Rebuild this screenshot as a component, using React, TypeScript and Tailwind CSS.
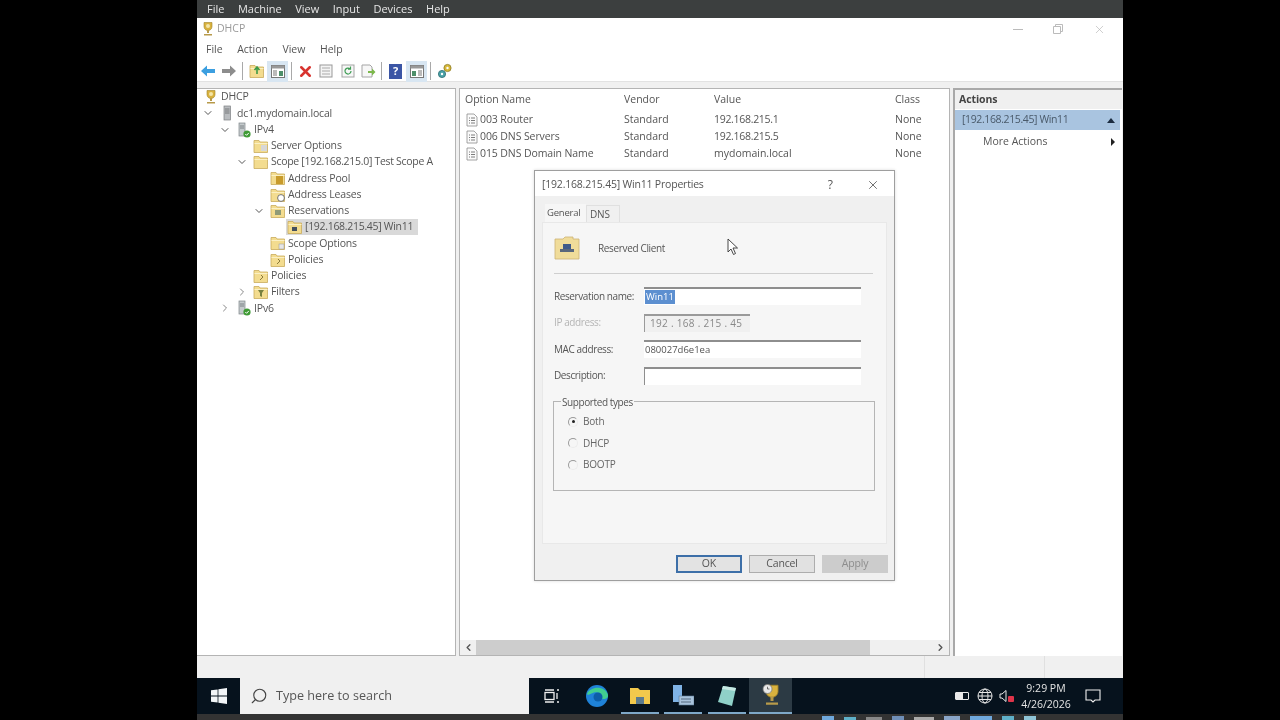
import type { ReactNode } from "react";
import { ChevronDown, ChevronRight, ChevronLeft, X, Search } from "lucide-react";

const uiFont = "font-['Open_Sans','Noto_Sans',sans-serif]";

function FolderIcon({ children }: { children?: ReactNode }) {
  return (
    <svg width="16" height="16" viewBox="0 0 16 16" className="shrink-0">
      <path d="M1 2.500h5l1 1.500h7.500v10.500H1z" fill="#f3dc8f" stroke="#c9ab5c" strokeWidth="0.8" />
      <path d="M1.500 5.500h13" stroke="#fbf0c4" strokeWidth="1" />
      {children}
    </svg>
  );
}

function ServerIcon() {
  return (
    <svg width="16" height="16" viewBox="0 0 16 16" className="shrink-0">
      <rect x="5" y="1" width="6.5" height="14" fill="#b9bcbf" stroke="#7c7f82" strokeWidth="0.7" />
      <path d="M6 4h4.500M6 6h4.500M6 8h4.500" stroke="#65686b" strokeWidth="0.8" />
    </svg>
  );
}

function TrophyIcon({ size = 16, clock }: { size?: number; clock?: boolean }) {
  return (
    <svg width={size} height={size} viewBox="0 0 16 16" className="shrink-0">
      <path d="M4 1.500h8v4c0 2.500-2 4-4 4s-4-1.500-4-4z" fill="#d9b23e" stroke="#a08328" strokeWidth="0.6" />
      <path d="M7 9h2v3H7zM4 13h8v1.500H4z" fill="#b79a4a" />
      {clock ? (
        <>
          <circle cx="5" cy="4" r="3" fill="#e8e8e8" stroke="#777" strokeWidth="0.5" />
          <path d="M5 2.500V4h1.300" stroke="#444" strokeWidth="0.5" fill="none" />
        </>
      ) : (
        <circle cx="8" cy="5" r="2" fill="#f4e6a8" />
      )}
    </svg>
  );
}

function IpIcon() {
  return (
    <svg width="16" height="16" viewBox="0 0 16 16" className="shrink-0">
      <rect x="3" y="1" width="6" height="13" fill="#c4cacc" stroke="#7e8588" strokeWidth="0.7" />
      <path d="M4 4h4M4 6h4" stroke="#6b7073" strokeWidth="0.8" />
      <circle cx="11" cy="12" r="3.600" fill="#3f9b35" />
      <path d="M9.300 12l1.300 1.300 2.200-2.400" stroke="#fff" strokeWidth="1" fill="none" />
    </svg>
  );
}

function DocIcon() {
  return (
    <svg width="14" height="14" viewBox="0 0 14 14" className="shrink-0">
      <path d="M2 1h7l3 3v9H2z" fill="#fbfbfb" stroke="#8d8d8d" strokeWidth="0.8" />
      <path d="M4 5h1M6 5h4M4 7.500h1M6 7.500h4M4 10h1M6 10h4" stroke="#6d6d6d" strokeWidth="0.9" />
    </svg>
  );
}

const depthClass = ["pl-[3px]", "pl-[3px]", "pl-[20px]", "pl-[37px]", "pl-[54px]", "pl-[71px]"];

type TreeRowProps = {
  depth: number;
  label: string;
  icon: ReactNode;
  open?: boolean;
  closed?: boolean;
  selected?: boolean;
  tight?: boolean;
};

function TreeRow({ depth, label, icon, open, closed, selected, tight }: TreeRowProps) {
  return (
    <div className={`flex h-[16.25px] items-center ${depthClass[depth]}`}>
      <span className={`flex items-center justify-center ${depth === 0 ? "w-0" : "w-[16px]"} shrink-0`}>
        {open && <ChevronDown size={12} className="text-[#555]" />}
        {closed && <ChevronRight size={12} className="text-[#888]" />}
      </span>
      <span className={`ml-[2px] flex h-[16px] items-center pr-[5px] ${selected ? "bg-[#d9d9d9]" : ""}`}>
        <span className="ml-[1px] mr-[2px]">{icon}</span>
        <span className={`whitespace-nowrap text-[10.5px] text-[#555] ${tight ? "tracking-[-0.3px]" : "tracking-[-0.15px]"}`}>{label}</span>
      </span>
    </div>
  );
}

function ToolSep() {
  return <span className="mx-[3px] h-[18px] w-px bg-[#a9a9a9]" />;
}

function Toolbar() {
  return (
    <div className="flex h-[22px] items-center border-b border-[#e2e2e2] bg-white pt-px">
      <span className="flex w-[21px] justify-center">
        <svg width="16" height="14" viewBox="0 0 16 14">
          <path d="M1 7l6-5.500V5h8v4H7v3.500z" fill="#3c9fe0" />
        </svg>
      </span>
      <span className="flex w-[21px] justify-center">
        <svg width="16" height="14" viewBox="0 0 16 14">
          <path d="M15 7L9 1.500V5H1v4h8v3.500z" fill="#8d8d8d" />
        </svg>
      </span>
      <ToolSep />
      <span className="flex w-[21px] justify-center">
        <FolderIcon>
          <path d="M8 11V5M5.500 7L8 4l2.500 3" stroke="#3d9a46" strokeWidth="1.6" fill="none" />
        </FolderIcon>
      </span>
      <span className="flex h-[21px] w-[21px] items-center justify-center bg-[#d8e6f2]">
        <svg width="14" height="13" viewBox="0 0 14 13">
          <rect x="0.5" y="0.5" width="13" height="12" fill="#fff" stroke="#777" />
          <rect x="0.5" y="0.5" width="13" height="3" fill="#999" />
          <path d="M2 6h4M2 8h4M2 10h4" stroke="#777" />
          <path d="M8 6h4v5H8z" fill="#4d8f6a" />
        </svg>
      </span>
      <ToolSep />
      <span className="flex w-[20px] justify-center">
        <X size={17} strokeWidth={3.6} className="text-[#d8342f]" />
      </span>
      <span className="flex w-[22px] justify-center">
        <svg width="14" height="14" viewBox="0 0 14 14">
          <rect x="1" y="1" width="12" height="12" fill="#f4f4f4" stroke="#999" />
          <path d="M3 4h8M3 7h8M3 10h8" stroke="#aaa" />
        </svg>
      </span>
      <span className="flex w-[21px] justify-center">
        <svg width="14" height="14" viewBox="0 0 14 14">
          <rect x="1" y="1" width="12" height="12" fill="#f7f7f7" stroke="#a5a5a5" />
          <path d="M10 7a3 3 0 1 1-1-2.200M9.500 2.500v2.600H7" stroke="#3f9d55" strokeWidth="1.2" fill="none" />
        </svg>
      </span>
      <span className="flex w-[20px] justify-center">
        <svg width="15" height="14" viewBox="0 0 15 14">
          <path d="M1 1h8l2 2v10H1z" fill="#f7f7f7" stroke="#a5a5a5" />
          <path d="M7 7h4V4.500L14.500 8 11 11.500V9H7z" fill="#7cb84b" />
        </svg>
      </span>
      <ToolSep />
      <span className="flex w-[21px] justify-center">
        <span className="flex h-[15px] w-[13px] items-center justify-center bg-[#3b55a5] text-[11px] font-bold text-white">?</span>
      </span>
      <span className="flex h-[21px] w-[21px] items-center justify-center bg-[#d8e6f2]">
        <svg width="14" height="13" viewBox="0 0 14 13">
          <rect x="0.5" y="0.5" width="13" height="12" fill="#fff" stroke="#777" />
          <rect x="0.5" y="0.5" width="13" height="3" fill="#999" />
          <path d="M8 6h4M8 8h4M8 10h4" stroke="#777" />
          <path d="M2 6h4v5H2z" fill="#4d8f6a" />
        </svg>
      </span>
      <ToolSep />
      <span className="flex w-[22px] justify-center">
        <svg width="16" height="16" viewBox="0 0 16 16">
          <circle cx="10.500" cy="5" r="3.600" fill="#d8b93a" stroke="#8b7a22" strokeWidth="0.8" />
          <circle cx="5" cy="11" r="3.600" fill="#4aa2a8" stroke="#2c6d72" strokeWidth="0.8" />
          <circle cx="10.500" cy="5" r="1.200" fill="#fff" />
          <circle cx="5" cy="11" r="1.200" fill="#fff" />
        </svg>
      </span>
    </div>
  );
}

function Tree() {
  return (
    <div className="flex flex-col">
      <TreeRow depth={0} label="DHCP" icon={<TrophyIcon />} />
      <TreeRow depth={1} label="dc1.mydomain.local" icon={<ServerIcon />} open />
      <TreeRow depth={2} label="IPv4" icon={<IpIcon />} open />
      <TreeRow depth={3} label="Server Options" icon={<FolderIcon><rect x="8" y="7" width="6" height="6" fill="#d7d7d7" /></FolderIcon>} />
      <TreeRow depth={3} label="Scope [192.168.215.0] Test Scope A" tight icon={<FolderIcon />} open />
      <TreeRow depth={4} label="Address Pool" icon={<FolderIcon><rect x="6" y="6" width="7" height="8" fill="#c89b2c" /></FolderIcon>} />
      <TreeRow depth={4} label="Address Leases" icon={<FolderIcon><circle cx="11" cy="11" r="3.400" fill="#fff" stroke="#555" strokeWidth="0.8" /></FolderIcon>} />
      <TreeRow depth={4} label="Reservations" icon={<FolderIcon><rect x="5" y="7" width="6" height="5" fill="#8f9a77" /></FolderIcon>} open />
      <TreeRow depth={5} label="[192.168.215.45] Win11" tight selected icon={<FolderIcon><rect x="5" y="8" width="5" height="4" fill="#45505e" /></FolderIcon>} />
      <TreeRow depth={4} label="Scope Options" icon={<FolderIcon><rect x="9" y="9" width="5" height="5" fill="#e6e6e6" stroke="#999" strokeWidth="0.5" /></FolderIcon>} />
      <TreeRow depth={4} label="Policies" icon={<FolderIcon><path d="M8 7l2 2-3 3" stroke="#8a7a3a" fill="none" /></FolderIcon>} />
      <TreeRow depth={3} label="Policies" icon={<FolderIcon><path d="M8 7l2 2-3 3" stroke="#8a7a3a" fill="none" /></FolderIcon>} />
      <TreeRow depth={3} label="Filters" closed icon={<FolderIcon><path d="M5 6h6L9 9v4l-2-1V9z" fill="#78803f" /></FolderIcon>} />
      <TreeRow depth={2} label="IPv6" closed icon={<IpIcon />} />
    </div>
  );
}

const optionRows = [
  { name: "003 Router", vendor: "Standard", value: "192.168.215.1", valueClass: "tracking-[-0.3px]", cls: "None" },
  { name: "006 DNS Servers", vendor: "Standard", value: "192.168.215.5", valueClass: "tracking-[-0.3px]", cls: "None" },
  { name: "015 DNS Domain Name", vendor: "Standard", value: "mydomain.local", valueClass: "", cls: "None" },
];

function OptionList() {
  const cols = "grid grid-cols-[159px_90px_181px_1fr]";
  return (
    <div className="flex min-h-0 flex-1 flex-col">
      <div className={`${cols} h-[22px] items-center pl-[5px] text-[10.5px] text-[#555]`}>
        <span>Option Name</span>
        <span>Vendor</span>
        <span>Value</span>
        <span>Class</span>
      </div>
      {optionRows.map((row) => (
        <div key={row.name} className={`${cols} h-[17.3px] items-center pl-[5px] text-[10.5px] text-[#555]`}>
          <span className="flex items-center gap-[1px] whitespace-nowrap tracking-[-0.1px]">
            <DocIcon />
            {row.name}
          </span>
          <span>{row.vendor}</span>
          <span className={row.valueClass}>{row.value}</span>
          <span>{row.cls}</span>
        </div>
      ))}
      <div className="flex-1" />
      <div className="flex h-[15px] items-center bg-[#f0f0f0] pl-[3px] pr-[3px]">
        <ChevronLeft size={11} strokeWidth={3} className="text-[#555]" />
        <span className="ml-[2px] h-full w-[394px] bg-[#cdcdcd]" />
        <span className="flex-1" />
        <ChevronRight size={11} strokeWidth={3} className="text-[#555]" />
      </div>
    </div>
  );
}

function ActionsPane() {
  return (
    <div className="flex w-[169px] flex-col border-t-2 border-l-2 border-[#a9a9a9] bg-white">
      <div className="flex h-[19px] items-center bg-[#f0f0f0] pl-[4px] text-[10.5px] font-bold tracking-[-0.1px] text-[#444]">Actions</div>
      <div className="mt-px mr-[2px] flex h-[20px] items-center justify-between bg-[#a9c4e0] pl-[7px] pr-[5px] text-[10.5px] text-[#4a5a6a]">
        <span className="tracking-[-0.38px]">[192.168.215.45] Win11</span>
        <span className="h-0 w-0 border-x-[4px] border-b-[5px] border-x-transparent border-b-[#1c2c40]" />
      </div>
      <div className="flex h-[24px] items-center justify-between pl-[28px] pr-[7px] text-[10.5px] text-[#555]">
        <span>More Actions</span>
        <span className="h-0 w-0 border-y-[4px] border-l-[4px] border-y-transparent border-l-[#222]" />
      </div>
    </div>
  );
}

function FieldInput({ value, selected }: { value?: string; selected?: boolean }) {
  return (
    <div className="flex h-[18px] w-[217px] items-center border-t-2 border-[#8e8e8e] bg-white pl-[1px] text-[9.5px] text-[#555]">
      {selected ? <span className="bg-[#5c8fd0] px-[1px] text-white">{value}</span> : value}
    </div>
  );
}

function FormRow({ label, disabled, children }: { label: string; disabled?: boolean; children: ReactNode }) {
  return (
    <div className="flex h-[18px] items-center">
      <span className={`w-[90px] shrink-0 text-[10px] tracking-[-0.4px] ${disabled ? "text-[#b5b5b5]" : "text-[#555]"}`}>{label}</span>
      {children}
    </div>
  );
}

function Radio({ label, checked }: { label: string; checked?: boolean }) {
  return (
    <div className="flex h-[21.5px] items-center gap-[5px]">
      <span className="flex h-[10px] w-[10px] items-center justify-center rounded-full border border-[#9a9a9a] border-r-[#ececec] border-b-[#ececec]">
        {checked && <span className="h-[3px] w-[3px] rounded-full bg-[#222]" />}
      </span>
      <span className="text-[10px] tracking-[-0.2px] text-[#666]">{label}</span>
    </div>
  );
}

function Dialog() {
  return (
    <div className="absolute left-[534px] top-[170px] flex h-[411px] w-[361px] flex-col border border-[#9e9e9e] bg-[#f0f0f0] text-[#555] shadow-[0_0_3px_rgba(0,0,0,0.15)]">
      <div className="flex h-[27px] items-center justify-between bg-white pl-[7px] pr-[14px] pt-[2px]">
        <span className="text-[10.5px] tracking-[-0.2px] text-[#555]">[192.168.215.45] Win11 Properties</span>
        <span className="flex items-center gap-[33px]">
          <span className="text-[12px] text-[#555]">?</span>
          <X size={14} strokeWidth={1.2} className="text-[#333]" />
        </span>
      </div>
      <div className="flex flex-1 flex-col px-[7px] pb-[7px]">
        <div className="flex h-[26px] items-end pl-[3px]">
          <span className="flex h-[18px] w-[41px] items-center bg-[#f6f6f6] pl-[2px] text-[9.5px] tracking-[-0.2px] text-[#555]">General</span>
          <span className="flex h-[17px] w-[34px] items-center border border-b-0 border-[#e0e0e0] pl-[3px] text-[10px] tracking-[-0.2px] text-[#555]">DNS</span>
        </div>
        <div className="flex h-[322px] flex-col border border-[#e8e8e8] bg-[#f6f6f6] px-[11px] pt-[12px]">
          <div className="flex h-[26px] items-center gap-[18px]">
            <svg width="26" height="24" viewBox="0 0 26 24">
              <path d="M1 3h8l2-2h8v2h6v20H1z" fill="#f0dc9a" stroke="#cdb373" strokeWidth="0.8" />
              <rect x="9" y="8" width="8" height="7" fill="#3f5a8a" />
              <rect x="6" y="13" width="14" height="3" fill="#59677c" />
            </svg>
            <span className="text-[10px] tracking-[-0.35px] text-[#555]">Reserved Client</span>
          </div>
          <div className="mt-[12px] mr-[2px] h-px bg-[#cfcfcf]" />
          <div className="mt-[13px] flex flex-col gap-[8.67px]">
            <FormRow label="Reservation name:">
              <FieldInput value="Win11" selected />
            </FormRow>
            <FormRow label="IP address:" disabled>
              <div className="flex h-[18px] w-[106px] items-center border-t-2 border-l border-[#9a9a9a] bg-[#f0f0f0] pl-[5px] text-[10px] tracking-[0.3px] text-[#888]">
                192 . 168 . 215 . 45
              </div>
            </FormRow>
            <FormRow label="MAC address:">
              <FieldInput value="080027d6e1ea" />
            </FormRow>
            <FormRow label="Description:">
              <div className="h-[18px] w-[217px] border-t-2 border-l border-[#8e8e8e] bg-white" />
            </FormRow>
          </div>
          <div className="relative mt-[16px] -ml-px flex h-[90px] w-[322px] flex-col border border-[#b5b5b5] pl-[14px] pt-[9px]">
            <span className="absolute -top-[7px] left-[7px] bg-[#f6f6f6] px-px text-[10px] tracking-[-0.4px] text-[#555]">Supported types</span>
            <Radio label="Both" checked />
            <Radio label="DHCP" />
            <Radio label="BOOTP" />
          </div>
        </div>
        <div className="-mr-px mt-[11px] flex justify-end gap-[7px]">
          <span className="flex h-[18px] w-[66px] items-center justify-center border-2 border-[#3d6fa8] bg-[#e3e3e3] text-[10.5px] text-[#555]">OK</span>
          <span className="flex h-[18px] w-[66px] items-center justify-center border border-[#adadad] bg-[#e1e1e1] text-[10.5px] tracking-[-0.2px] text-[#555]">Cancel</span>
          <span className="flex h-[18px] w-[66px] items-center justify-center bg-[#cccccc] text-[10.5px] tracking-[-0.2px] text-[#8d8d8d]">Apply</span>
        </div>
      </div>
    </div>
  );
}

function Taskbar() {
  return (
    <div className="flex h-[36px] items-stretch bg-[#06121d] text-white">
      <span className="flex w-[43px] items-center justify-center">
        <svg width="16" height="16" viewBox="0 0 16 16">
          <path d="M0 2.300l6.600-.9v6.100H0zM7.400 1.300L16 0v7.500H7.400zM0 8.400h6.600v6.200L0 13.700zM7.400 8.400H16V16l-8.600-1.200z" fill="#f2f5f7" />
        </svg>
      </span>
      <div className="flex w-[289px] items-center gap-[8px] bg-[#f0f0f0] pl-[10px] text-[12.6px] text-[#555]">
        <Search size={18} strokeWidth={1.5} className="-scale-x-100 text-[#444]" />
        <span>Type here to search</span>
      </div>
      <span className="flex w-[45px] items-center justify-center">
        <svg width="16" height="14" viewBox="0 0 16 14" fill="none" stroke="#eee" strokeWidth="1.3">
          <rect x="1" y="3.500" width="9" height="7" />
          <path d="M1 1h9M1 13h9M13 1h2M13 4v6M13 13h2" />
        </svg>
      </span>
      <span className="flex w-[45px] items-center justify-center">
        <svg width="24" height="24" viewBox="0 0 24 24">
          <circle cx="12" cy="12" r="11" fill="#1f82d8" />
          <path d="M2 10C5 2 20 1 23 11c.6 4-5 5-8 3 3-3-1-7-6-5.500C5 10 3 12 2 10z" fill="#41cf8f" />
          <circle cx="13" cy="13" r="4.500" fill="#0d5ea8" />
        </svg>
      </span>
      <span className="mx-[2px] flex w-[38px] flex-col items-center justify-center border-b-2 border-[#7fa8c8] pt-[2px]">
        <svg width="22" height="18" viewBox="0 0 22 18">
          <path d="M1 1h8l2 2h10v14H1z" fill="#f2c94c" />
          <rect x="7" y="10" width="8" height="7" fill="#5c7b8e" />
        </svg>
      </span>
      <span className="mx-[3px] flex w-[38px] items-center justify-center border-b-2 border-[#7fa8c8] pt-[2px]">
        <svg width="22" height="24" viewBox="0 0 22 24">
          <rect x="1" y="1" width="9" height="17" fill="#7fb3e6" />
          <rect x="7" y="12" width="15" height="9" fill="#a9c3dc" stroke="#5e7c98" strokeWidth="0.6" />
          <path d="M9 15h10M9 18h10" stroke="#546b80" />
        </svg>
      </span>
      <span className="mx-[3px] flex w-[38px] items-center justify-center border-b-2 border-[#7fa8c8] pt-[2px]">
        <svg width="20" height="22" viewBox="0 0 20 22">
          <path d="M6 1l13 2-4 18L1 17z" fill="#8fd0c8" />
          <path d="M6 1l13 2-1 3L5 4z" fill="#c6e9e4" />
        </svg>
      </span>
      <span className="flex w-[43px] items-center justify-center border-b-2 border-[#7fa8c8] bg-[#2c3a44] pl-[2px]">
        <TrophyIcon size={24} clock />
      </span>
      <span className="flex-1" />
      <div className="flex items-center pr-[5px]">
        <span className="mr-[8px] flex h-[8px] w-[14px] rounded-[1px] border border-[#e8e8e8]">
          <span className="h-full w-[7px] bg-[#e8e8e8]" />
        </span>
        <svg width="16" height="16" viewBox="0 0 16 16" fill="none" stroke="#e8e8e8" strokeWidth="1" className="mr-[6px]">
          <circle cx="8" cy="8" r="7" />
          <ellipse cx="8" cy="8" rx="3" ry="7" />
          <path d="M1 8h14M2 4.500h12M2 11.500h12" />
        </svg>
        <svg width="16" height="14" viewBox="0 0 16 14" className="mr-[3px]">
          <path d="M1 5h2l4-3.500v11L3 9H1z" fill="none" stroke="#e8e8e8" />
          <rect x="9" y="7" width="6" height="6" rx="1" fill="#e0344a" />
        </svg>
        <div className="flex w-[56px] flex-col items-center text-[10.5px] leading-[16px] text-[#e4e4e4]">
          <span>9:29 PM</span>
          <span>4/26/2026</span>
        </div>
        <svg width="16" height="16" viewBox="0 0 16 16" fill="none" stroke="#f0f0f0" strokeWidth="1.1" className="ml-[11px] mr-[17px]">
          <path d="M1 2h14v10h-5l-2 2-2-2H1z" />
        </svg>
      </div>
    </div>
  );
}

export default function App() {
  return (
    <div className={`relative h-[720px] w-[1280px] overflow-hidden bg-black blur-[0.4px] ${uiFont}`}>
      <div className="ml-[197px] flex h-[720px] w-[926px] flex-col">
        <div className="flex h-[18px] items-center gap-[13.5px] bg-[#3c3f3f] pl-[10px] pt-[1px] text-[11px] text-[#e6e6e6]">
          <span>File</span>
          <span>Machine</span>
          <span>View</span>
          <span>Input</span>
          <span>Devices</span>
          <span>Help</span>
        </div>
        <div className="flex h-[22px] items-center justify-between bg-white pl-[3px] pr-[17px]">
          <span className="flex items-center gap-[1px] text-[10.5px] text-[#9a9a9a]">
            <TrophyIcon />
            DHCP
          </span>
          <span className="flex items-center gap-[30px] text-[#b5b5b5]">
            <span className="h-px w-[10px] bg-[#bbb]" />
            <svg width="10" height="10" viewBox="0 0 10 10" fill="none" stroke="#bbb">
              <path d="M.5 2.500h7v7h-7zM2.500 2.500v-2h7v7h-2" />
            </svg>
            <X size={13} strokeWidth={1.2} />
          </span>
        </div>
        <div className="flex h-[20px] items-center gap-[14.5px] bg-white pl-[9px] text-[10.5px] text-[#555]">
          <span>File</span>
          <span>Action</span>
          <span>View</span>
          <span>Help</span>
        </div>
        <Toolbar />
        <div className="flex min-h-0 flex-1 gap-[3px] bg-[#f0f0f0] pt-[6px]">
          <div className="w-[259px] border-y border-r border-[#b4b4b4] bg-white">
            <Tree />
          </div>
          <div className="flex w-[491px] border-y border-x border-[#b4b4b4] bg-white">
            <OptionList />
          </div>
          <ActionsPane />
        </div>
        <div className="flex h-[22px] justify-end bg-[#f0f0f0]">
          <span className="w-[120px] border-l border-[#e0e0e0]" />
          <span className="w-[79px] border-l border-[#e0e0e0]" />
        </div>
        <Taskbar />
        <div className="flex h-[6px] items-end gap-[10px] bg-[#333333] pl-[625px]">
          <span className="h-[4px] w-[12px] bg-[#6fa8dc]" />
          <span className="h-[3px] w-[12px] bg-[#5fb0c8]" />
          <span className="h-[3px] w-[16px] bg-[#888]" />
          <span className="h-[4px] w-[12px] bg-[#6f8fb8]" />
          <span className="h-[3px] w-[20px] bg-[#aaa]" />
          <span className="h-[4px] w-[16px] bg-[#8aa5c8]" />
          <span className="h-[4px] w-[22px] bg-[#6fa8dc]" />
          <span className="h-[4px] w-[12px] bg-[#5fb0c8]" />
          <span className="h-[4px] w-[12px] bg-[#8fc5d8]" />
        </div>
      </div>
      <Dialog />
      <svg width="12" height="18" viewBox="0 0 12 18" className="absolute left-[727px] top-[238px]">
        <path d="M1 1v13l3-3 2.500 5.500 2-1L6 10h4.500z" fill="#fff" stroke="#333" strokeWidth="0.9" />
      </svg>
    </div>
  );
}
